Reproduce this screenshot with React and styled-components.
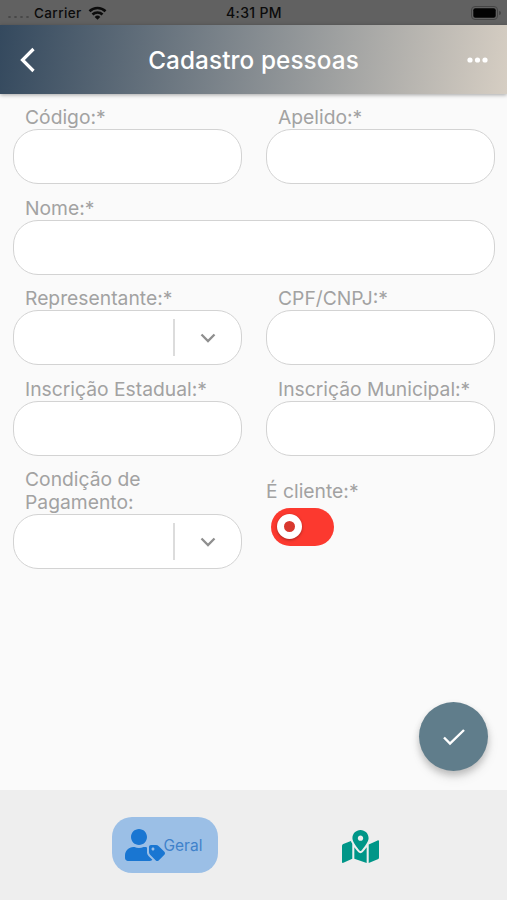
import { FaMapMarkedAlt, FaUserTag } from 'react-icons/fa'
import styled, { createGlobalStyle } from 'styled-components'

const GlobalStyle = createGlobalStyle`
* {
  box-sizing: border-box;
}
body {
  margin: 0;
  font-family: Inter, Roboto, sans-serif;
}
`
const Container = styled.div`
display: flex;
flex-direction: column;
height: 900px;
width: 507px;
background-color: #fafafa;
overflow: hidden;
`
const StatusBar = styled.div`
display: grid;
grid-template-columns: 1fr auto 1fr;
align-items: center;
height: 25px;
padding: 1px 6px 0 7px;
background-color: #616161;
color: #0b0b0b;
font-size: 13.5px;
font-weight: 500;
line-height: 24px;
`
const Carrier = styled.div`
display: flex;
align-items: center;
`
const Signal = styled.div`
display: flex;
gap: 3px;
margin: 8px 5px 0 1px;
`
const SignalDot = styled.span`
width: 3px;
height: 2px;
border-radius: 50%;
background-color: #474747;
`
const CarrierName = styled.span`
letter-spacing: 0.4px;
margin-right: 6px;
`
const Clock = styled.span`
font-size: 14px;
letter-spacing: 0.35px;
`
const Battery = styled.svg`
justify-self: end;
`
const Header = styled.header`
display: grid;
grid-template-columns: 60px 1fr 60px;
align-items: center;
flex: none;
height: 69px;
color: white;
background: linear-gradient(97.8deg, #34495e 0%, #d6cec3 100%);
box-shadow: 0 1px 4px rgba(0, 0, 0, 0.35);
z-index: 1;
`
const Title = styled.h1`
margin: 0;
font-size: 24.3px;
font-weight: 500;
letter-spacing: 0.1px;
text-align: center;
white-space: nowrap;
`
const HeaderButton = styled.button`
display: flex;
justify-content: ${props => props.$end ? 'flex-end' : 'flex-start'};
padding: ${props => props.$end ? '0 19px 0 0' : '0 0 0 19px'};
border: none;
background: none;
color: inherit;
`
const Form = styled.form`
display: grid;
grid-template-columns: 1fr 1fr;
grid-template-rows: repeat(4, 78.5px) 102px;
column-gap: 24px;
row-gap: 12px;
flex: 1;
align-content: start;
padding: 12px 12px 0 13px;
`
const Field = styled.div`
display: flex;
flex-direction: column;
min-width: 0;
grid-column: span ${props => props.$span || 1};
`
const Label = styled.label`
padding: 0 40px 0 12px;
color: #a2a2a2;
font-size: 19.3px;
line-height: 23.2px;
white-space: ${props => props.$wrap ? 'normal' : 'nowrap'};
`
const Input = styled.input`
width: 100%;
height: 55px;
padding: 0 20px;
border: 1px solid #d3d3d3;
border-radius: 25px;
background-color: white;
font: inherit;
outline: none;
`
const Select = styled.div`
display: flex;
align-items: center;
justify-content: flex-end;
height: 55px;
border: 1px solid #d3d3d3;
border-radius: 25px;
background-color: white;
`
const Arrow = styled.div`
display: flex;
align-items: center;
justify-content: center;
width: 68px;
height: 37px;
border-left: 2px solid #dcdcdc;
`
const SwitchField = styled.div`
display: flex;
flex-direction: column;
padding-top: 12px;
`
const SwitchLabel = styled.span`
color: #a2a2a2;
font-size: 19.3px;
line-height: 23.2px;
`
const Switch = styled.button`
display: flex;
align-items: center;
width: 63px;
height: 38px;
margin: 4.5px 0 0 5px;
padding: 0 6px;
border: none;
border-radius: 19px;
background-color: #fc392f;
`
const Thumb = styled.span`
width: 25px;
height: 25px;
border: 7.5px solid white;
border-radius: 50%;
background-color: #d8382e;
box-shadow: 0 1px 3px rgba(0, 0, 0, 0.35);
`
const FabRow = styled.div`
display: flex;
justify-content: flex-end;
padding: 0 19px 19px 0;
`
const Fab = styled.button`
display: flex;
align-items: center;
justify-content: center;
width: 69px;
height: 69px;
padding: 0;
border: none;
border-radius: 50%;
background-color: #607d8b;
box-shadow: 0 4px 7px rgba(0, 0, 0, 0.2), 1px 7px 12px rgba(0, 0, 0, 0.08);
`
const TabBar = styled.nav`
display: flex;
align-items: center;
flex: none;
gap: 89px;
height: 110px;
padding-left: 112px;
background-color: #eeeeee;
`
const Tab = styled.button`
display: flex;
align-items: center;
justify-content: ${props => props.$active ? 'flex-start' : 'center'};
width: 106px;
height: 56px;
padding: ${props => props.$active ? '0 0 0 12.5px' : '2px 0 0'};
border: none;
border-radius: 20px;
background-color: ${props => props.$active ? '#9bbfe6' : 'transparent'};
color: ${props => props.$active ? '#1976d2' : '#009688'};
`
const TabText = styled.span`
color: #3f82cb;
font-family: Inter, Roboto, sans-serif;
font-size: 15.5px;
margin-left: -1px;
`

const TextField = ({ label, span }) => (
    <Field $span={span}>
        <Label>{label}</Label>
        <Input aria-label={label} />
    </Field>
)

const SelectField = ({ label, wrap }) => (
    <Field>
        <Label $wrap={wrap}>{label}</Label>
        <Select>
            <Arrow>
                <svg width="16" height="10" viewBox="0 0 16 10" fill="none" stroke="#8f8f8f" strokeWidth="2.3">
                    <path d="M1.5 1.5L8 8l6.5-6.5" />
                </svg>
            </Arrow>
        </Select>
    </Field>
)

const App = () => {
    return (
        <Container>
            <GlobalStyle />
            <StatusBar>
                <Carrier>
                    <Signal>
                        <SignalDot />
                        <SignalDot />
                        <SignalDot />
                        <SignalDot />
                    </Signal>
                    <CarrierName>Carrier</CarrierName>
                    <svg width="19" height="14" viewBox="0 0 18 14" fill="none" stroke="currentColor" strokeWidth="2.6">
                        <path d="M1 5.2a11.5 11.5 0 0 1 16 0" />
                        <path d="M4 8.5a7.2 7.2 0 0 1 10 0" />
                        <path d="M6.2 10.9a4 4 0 0 1 5.6 0L9 13.7z" fill="currentColor" stroke="none" />
                    </svg>
                </Carrier>
                <Clock>4:31 PM</Clock>
                <Battery width="30" height="14" viewBox="0 0 30 14">
                    <rect x=".5" y=".5" width="26" height="13" rx="3.5" fill="none" stroke="#454545" />
                    <rect x="2.3" y="2.3" width="22.4" height="9.4" rx="2" fill="#030303" />
                    <path d="M28 5a2 2 0 0 1 0 4z" fill="#454545" />
                </Battery>
            </StatusBar>
            <Header>
                <HeaderButton aria-label="Voltar">
                    <svg width="17" height="26" viewBox="0 0 17 26" fill="none" stroke="currentColor" strokeWidth="3.2">
                        <path d="M14.5 2L3.5 13l11 11" />
                    </svg>
                </HeaderButton>
                <Title>Cadastro pessoas</Title>
                <HeaderButton $end aria-label="Mais">
                    <svg width="21" height="6" viewBox="0 0 21 6" fill="currentColor">
                        <circle cx="3" cy="3" r="2.6" />
                        <circle cx="10.5" cy="3" r="2.6" />
                        <circle cx="18" cy="3" r="2.6" />
                    </svg>
                </HeaderButton>
            </Header>
            <Form>
                <TextField label="Código:*" />
                <TextField label="Apelido:*" />
                <TextField label="Nome:*" span={2} />
                <SelectField label="Representante:*" />
                <TextField label="CPF/CNPJ:*" />
                <TextField label="Inscrição Estadual:*" />
                <TextField label="Inscrição Municipal:*" />
                <SelectField label="Condição de Pagamento:" wrap />
                <SwitchField>
                    <SwitchLabel>É cliente:*</SwitchLabel>
                    <Switch type="button" role="switch" aria-checked="false" aria-label="É cliente">
                        <Thumb />
                    </Switch>
                </SwitchField>
            </Form>
            <FabRow>
                <Fab aria-label="Salvar">
                    <svg width="24" height="18" viewBox="0 0 24 18" fill="none" stroke="white" strokeWidth="2.4">
                        <path d="M2 9.5l6 6L22 2" />
                    </svg>
                </Fab>
            </FabRow>
            <TabBar>
                <Tab $active>
                    <FaUserTag size={40} />
                    <TabText>Geral</TabText>
                </Tab>
                <Tab aria-label="Endereço">
                    <FaMapMarkedAlt size={37} />
                </Tab>
            </TabBar>
        </Container>
    )
}

export default App
